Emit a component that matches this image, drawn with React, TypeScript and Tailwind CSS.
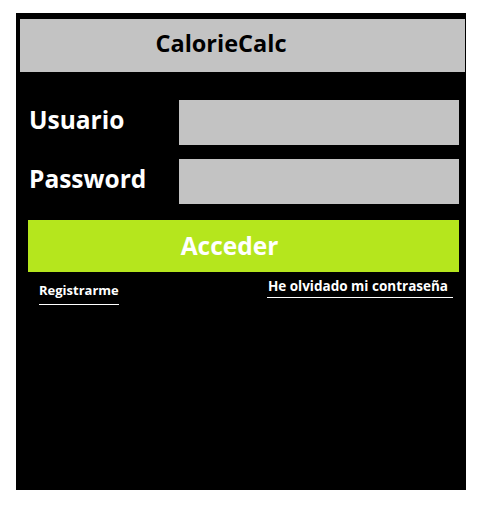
export default function App() {
  return (
    <div className="min-h-[505px] w-[492px] bg-white pt-[13px] pl-[16px] font-['Open_Sans','Noto_Sans',sans-serif]">
      <div className="flex h-[477px] w-[450px] flex-col bg-black pt-[6px] pl-[4px]">
        <header className="flex h-[53px] w-[445px] items-center justify-center bg-[#c3c3c3] pr-[43px] pb-[4px]">
          <h1 className="text-[23.5px] font-bold text-black">CalorieCalc</h1>
        </header>

        <div className="mt-[28px] flex flex-col gap-[14px] pr-[7px]">
          <div className="flex items-center">
            <label className="w-[159px] pl-[9px] pb-[4px] text-[24.5px] font-bold text-white">Usuario</label>
            <div className="h-[45px] w-[280px] bg-[#c3c3c3]" />
          </div>
          <div className="flex items-center">
            <label className="w-[159px] pl-[9px] pb-[4px] text-[24.5px] font-bold text-white">Password</label>
            <div className="h-[45px] w-[280px] bg-[#c3c3c3]" />
          </div>
        </div>

        <button className="mt-[16px] ml-[8px] flex h-[52px] w-[431px] items-center justify-center bg-[#b5e61d] pr-[28px] text-[24.5px] font-bold text-white">
          Acceder
        </button>

        <div className="flex items-start justify-between pl-[19px] pr-[13px]">
          <a className="mt-[9px] border-b border-white pb-[3px] text-[13px] font-bold text-white">Registrarme</a>
          <a className="mt-[4px] border-b border-white pl-[1px] pr-[5px] pb-[1px] text-[13.5px] font-bold text-white">He olvidado mi contraseña</a>
        </div>
      </div>
    </div>
  )
}
